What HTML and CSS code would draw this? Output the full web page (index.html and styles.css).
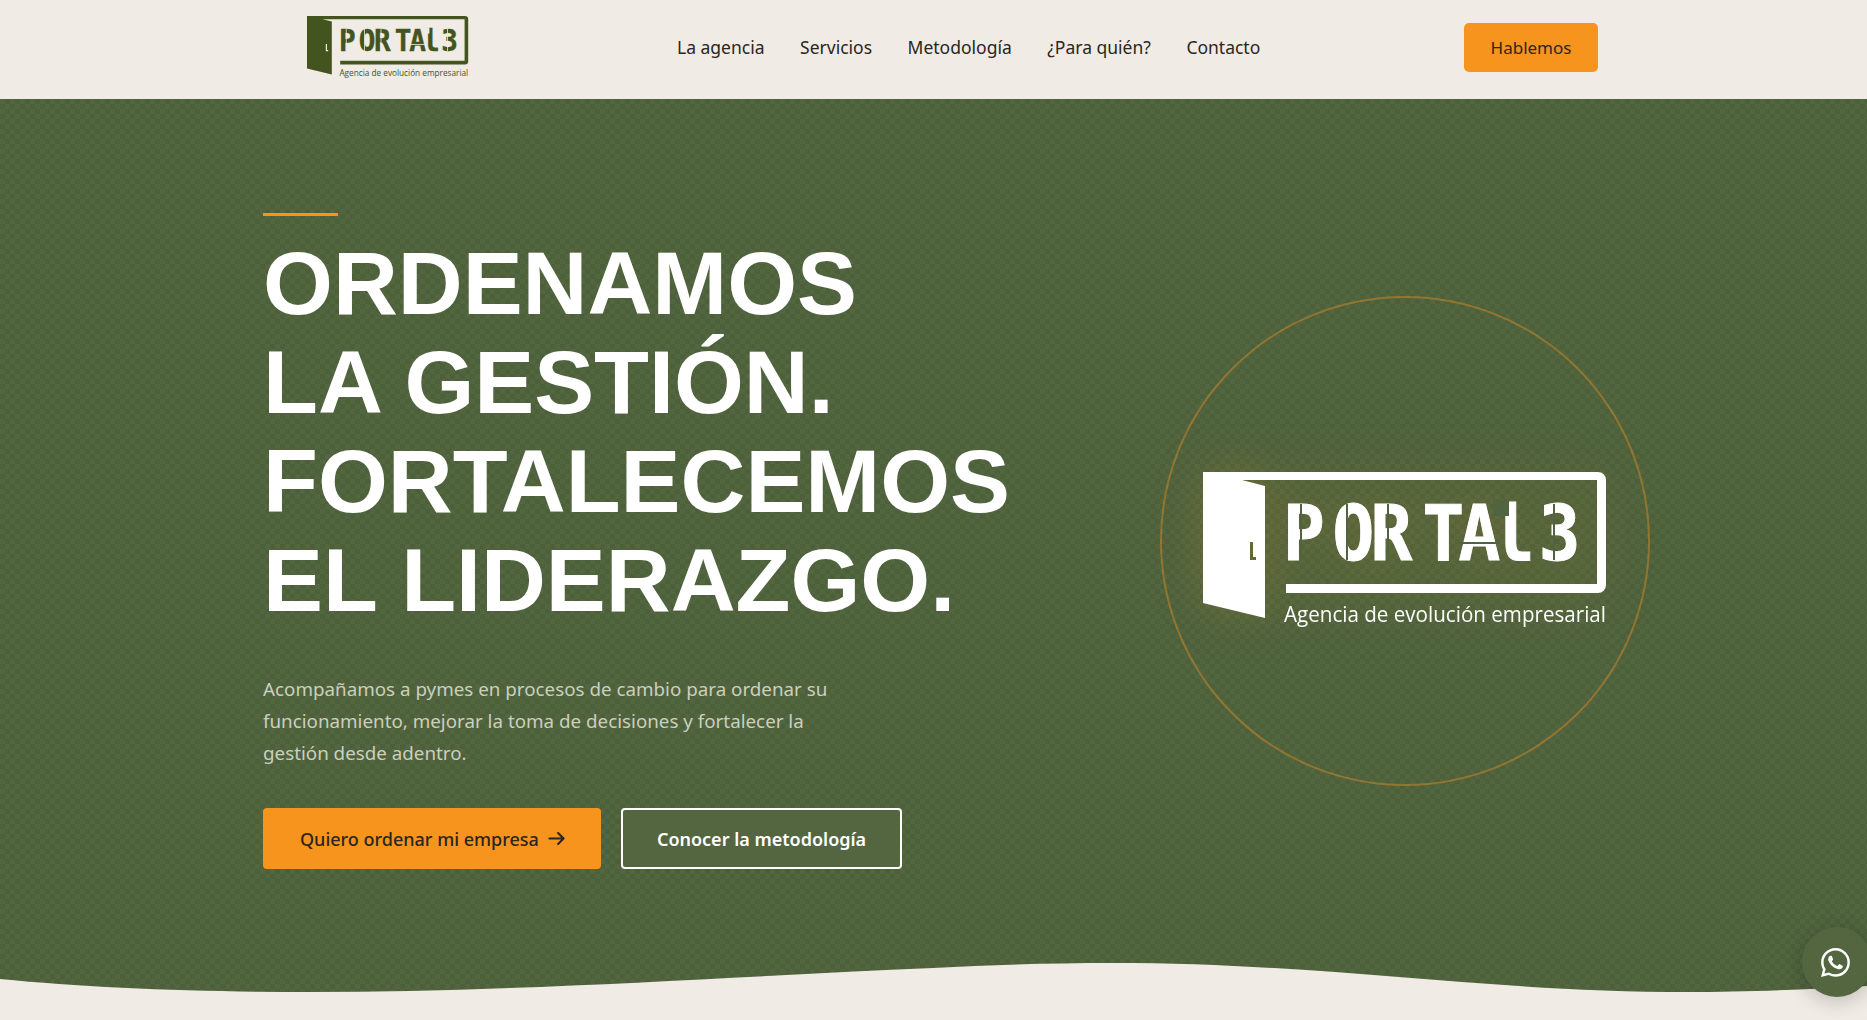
FILE: index.html
```html
<!DOCTYPE html>
<html lang="es">
<head>
    <meta charset="UTF-8">
    <meta name="viewport" content="width=device-width, initial-scale=1.0">
    <title>Portal 3 - Agencia de evolución empresarial</title>
    <link rel="stylesheet" href="styles.css">
</head>
<body>
    <header class="cabecera">
        <a href="#" class="cabecera-logo">
            <svg viewBox="0 0 410 160">
                <path fill="currentColor" fill-rule="evenodd" d="M0 0H395a8 8 0 0 1 8 8V113a8 8 0 0 1-8 8H83V112H394V8H39L62 14V146L0 131ZM47 70h3v15h3v3h-6Z"/>
                <text class="logo-name" fill="currentColor" transform="scale(.9 1)" x="89 144 186 244 284 322 345 373" y="88">PORTAl 3</text>
                <rect class="logo-cut" x="97" y="32" width="2" height="56"/>
                <rect class="logo-cut" x="143" y="32" width="2" height="56"/>
                <rect class="logo-cut" x="184" y="32" width="2" height="56"/>
                <rect class="logo-cut" x="256" y="70" width="40" height="2"/>
                <rect class="logo-cut" x="290" y="28" width="16" height="16"/>
                <rect class="logo-cut" x="350" y="32" width="2" height="56"/>
                <text class="logo-sub" fill="currentColor" x="81" y="150" textLength="322" lengthAdjust="spacingAndGlyphs">Agencia de evolución empresarial</text>
            </svg>
        </a>
        <nav class="menu">
            <a href="#">La agencia</a>
            <a href="#">Servicios</a>
            <a href="#">Metodología</a>
            <a href="#">¿Para quién?</a>
            <a href="#">Contacto</a>
        </nav>
        <a href="#" class="btn-hablemos">Hablemos</a>
    </header>

    <section class="hero">
        <div class="hero-texto">
            <span class="raya"></span>
            <h1>ORDENAMOS<br>LA GESTIÓN.<br>FORTALECEMOS<br>EL LIDERAZGO.</h1>
            <p>Acompañamos a pymes en procesos de cambio para ordenar su funcionamiento, mejorar la toma de decisiones y fortalecer la gestión desde adentro.</p>
            <div class="hero-botones">
                <a href="#" class="btn btn-naranja">Quiero ordenar mi empresa
                    <svg viewBox="0 0 24 24" fill="none" stroke="currentColor" stroke-width="2.6" stroke-linecap="round" stroke-linejoin="round"><path d="M3 12h18M14 5l7 7-7 7"/></svg>
                </a>
                <a href="#" class="btn btn-borde">Conocer la metodología</a>
            </div>
        </div>
        <div class="hero-circulo">
            <svg class="hero-logo" viewBox="0 0 410 160">
                <path fill="currentColor" fill-rule="evenodd" d="M0 0H395a8 8 0 0 1 8 8V113a8 8 0 0 1-8 8H83V112H394V8H39L62 14V146L0 131ZM47 70h3v15h3v3h-6Z"/>
                <text class="logo-name" fill="currentColor" transform="scale(.9 1)" x="89 144 186 244 284 322 345 373" y="88">PORTAl 3</text>
                <rect class="logo-cut" x="97" y="32" width="2" height="56"/>
                <rect class="logo-cut" x="143" y="32" width="2" height="56"/>
                <rect class="logo-cut" x="184" y="32" width="2" height="56"/>
                <rect class="logo-cut" x="256" y="70" width="40" height="2"/>
                <rect class="logo-cut" x="290" y="28" width="16" height="16"/>
                <rect class="logo-cut" x="350" y="32" width="2" height="56"/>
                <text class="logo-sub" fill="currentColor" x="81" y="150" textLength="322" lengthAdjust="spacingAndGlyphs">Agencia de evolución empresarial</text>
            </svg>
        </div>

        <svg class="ola" viewBox="0 0 1867 60" preserveAspectRatio="none">
            <path d="M0 19C90 28 200 32 310 32C520 32 740 16 933 8C990 5 1050 3 1112 3C1330 3 1480 32 1689 32C1740 32 1800 30 1867 26V60H0Z"/>
        </svg>
    </section>

    <a href="#" class="whatsapp" aria-label="WhatsApp">
        <svg viewBox="0 0 16 16" width="29" height="29" fill="currentColor"><path d="M13.601 2.326A7.854 7.854 0 0 0 7.994 0C3.627 0 .068 3.558.064 7.926c0 1.399.366 2.76 1.057 3.965L0 16l4.204-1.102a7.933 7.933 0 0 0 3.79.965h.004c4.368 0 7.926-3.558 7.93-7.93A7.898 7.898 0 0 0 13.6 2.326zM7.994 14.521a6.573 6.573 0 0 1-3.356-.92l-.24-.144-2.494.654.666-2.433-.156-.251a6.56 6.56 0 0 1-1.007-3.505c0-3.626 2.957-6.584 6.591-6.584a6.56 6.56 0 0 1 4.66 1.931 6.557 6.557 0 0 1 1.928 4.66c-.004 3.639-2.961 6.592-6.592 6.592zm3.615-4.934c-.197-.099-1.17-.578-1.353-.646-.182-.065-.315-.099-.445.099-.133.197-.513.646-.627.775-.114.133-.232.148-.43.05-.197-.1-.836-.308-1.592-.985-.59-.525-.985-1.175-1.103-1.372-.114-.198-.011-.304.088-.403.087-.088.197-.232.296-.346.1-.114.133-.198.198-.33.065-.134.034-.248-.015-.347-.05-.099-.445-1.076-.612-1.47-.16-.389-.323-.335-.445-.34-.114-.007-.247-.007-.38-.007a.729.729 0 0 0-.529.247c-.182.198-.691.677-.691 1.654 0 .977.71 1.916.81 2.049.098.133 1.394 2.132 3.383 2.992.47.205.84.326 1.129.418.475.152.904.129 1.246.08.38-.058 1.171-.48 1.338-.943.164-.464.164-.86.114-.943-.049-.084-.182-.133-.38-.232z"/></svg>
    </a>
</body>
</html>
```

FILE: styles.css
```css
/* Portal 3 - estilos de la portada */
html, body {
    margin: 0;
    height: 100%;
    overflow: hidden;
}
body {
    background: #f0ebe4;
    color: #2a2621;
    font-family: "Noto Sans", "Open Sans", sans-serif;
}
a {
    text-decoration: none;
    color: inherit;
}
.logo-name {
    font-family: "DejaVu Sans Mono", monospace;
    font-weight: 700;
    font-size: 77px;
    stroke: currentColor;
    stroke-width: 1;
}
.logo-sub {
    font-family: "Open Sans", sans-serif;
    font-size: 21px;
}
.logo-cut {
    fill: var(--corte);
}

/* cabecera */
.cabecera {
    display: flex;
    align-items: center;
    box-sizing: border-box;
    height: 99px;
    padding: 0 269px 4px 307px;
    --corte: #f0ebe4;
}
.cabecera-logo {
    display: flex;
    color: #43541f;
}
.cabecera-logo svg {
    width: 164px;
    height: 64px;
}
.menu {
    display: flex;
    gap: 35.5px;
    margin: 0 0 1px 206px;
    font-size: 17.5px;
}
.btn-hablemos {
    margin-left: auto;
    width: 134px;
    height: 49px;
    line-height: 49px;
    text-align: center;
    border-radius: 5px;
    background: #f7941d;
    font-size: 17px;
}

/* hero */
.hero {
    position: relative;
    display: flex;
    height: 921px;
    padding-left: 263px;
    box-sizing: border-box;
    --corte: #506440;
    color: #fff;
    background-color: #536640;
    background-image: conic-gradient(#4c603b 25%, transparent 0 50%, #4c603b 0 75%, transparent 0);
    background-size: 10px 10px;
}
.hero-texto {
    width: 897px;
    padding-top: 114px;
}
.raya {
    display: block;
    width: 75px;
    height: 3px;
    background: #f7941d;
}
.hero h1 {
    margin: 18px 0 43px;
    font-family: "Liberation Sans", Arial, sans-serif;
    font-size: 89.85px;
    line-height: 99px;
    font-weight: 700;
}
.hero p {
    margin: 0 0 39px;
    max-width: 590px;
    font-size: 18.8px;
    line-height: 32px;
    color: #cbcfbe;
}
.hero-botones {
    display: flex;
    gap: 20px;
}
.btn {
    display: flex;
    align-items: center;
    box-sizing: border-box;
    height: 61px;
    border-radius: 4px;
    font-size: 18px;
    font-weight: 500;
}
.btn-naranja {
    gap: 8px;
    padding: 0 35px 0 37px;
    background: #f7941d;
    color: #2a2621;
}
.btn-naranja svg {
    width: 19px;
    height: 19px;
}
.btn-borde {
    padding: 0 34px;
    border: 2px solid #fff;
    background: #536640;
    color: #fff;
    font-weight: 600;
}
.hero-circulo {
    display: flex;
    align-items: center;
    justify-content: center;
    box-sizing: border-box;
    width: 490px;
    height: 490px;
    margin-top: 197px;
    padding: 21px 0 0 5px;
    border: 2px solid rgba(247, 148, 29, .4);
    border-radius: 50%;
}
.hero-logo {
    flex: none;
    width: 410px;
    height: 160px;
    filter: drop-shadow(0 0 24px rgba(247, 148, 29, .18));
}
.ola {
    position: absolute;
    left: 0;
    bottom: 0;
    width: 100%;
    height: 60px;
    fill: #f0ebe4;
}

/* boton flotante */
.whatsapp {
    position: fixed;
    left: 1802px;
    top: 927px;
    display: flex;
    align-items: center;
    justify-content: center;
    box-sizing: border-box;
    width: 70px;
    height: 70px;
    padding-right: 4px;
    border-radius: 50%;
    background: #536640;
    color: #fff;
    box-shadow: 0 4px 20px rgba(0, 0, 0, .2);
}
```
